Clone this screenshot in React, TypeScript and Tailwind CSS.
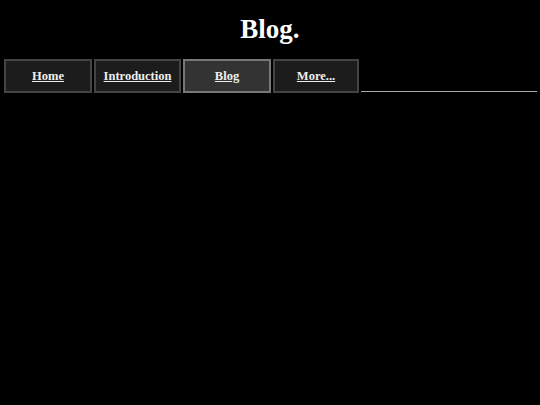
const tabs = [
  { label: "Home", active: false, width: "w-[88px]" },
  { label: "Introduction", active: false, width: "w-[87px]" },
  { label: "Blog", active: true, width: "w-[88px]" },
  { label: "More...", active: false, width: "w-[86px]" },
];

export default function App() {
  return (
    <div className="min-h-[405px] w-full bg-black text-white font-['Liberation_Serif',serif]">
      <h1 className="pt-[14px] text-center text-[27px] font-bold leading-[30px]">Blog.</h1>

      <nav className="mt-[15px] flex items-end gap-[2px] pl-[4px] pr-[3px]">
        {tabs.map((t) => (
          <a
            key={t.label}
            href="#"
            className={`flex h-[34px] ${t.width} items-center justify-center border-2 text-[12.5px] font-bold text-[#eeeeee] underline ${
              t.active ? "border-[#777777] bg-[#333333]" : "border-[#444444] bg-[#1c1c1c]"
            }`}
          >
            {t.label}
          </a>
        ))}
        <div className="mb-[1px] flex-1 border-b border-[#aaaaaa]" />
      </nav>
    </div>
  );
}
